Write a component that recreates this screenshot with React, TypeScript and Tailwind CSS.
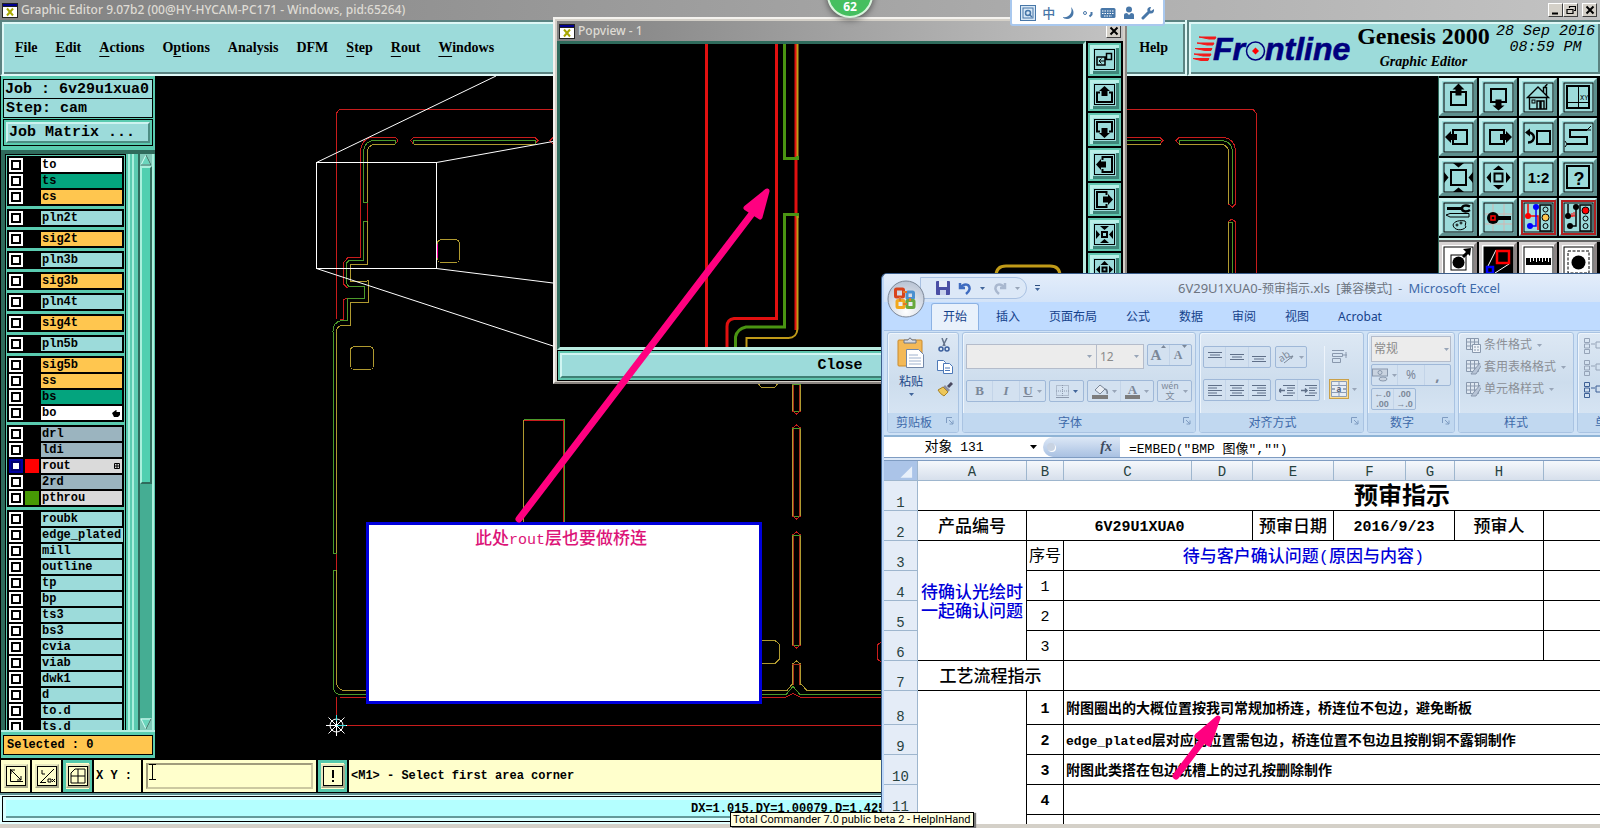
import type { ReactNode } from "react";
import { clsx } from "clsx";

const UI = "font-['Noto_Sans','Noto_Sans_CJK_SC',sans-serif]";
const MONO = "font-['Liberation_Mono','Noto_Sans_CJK_SC',monospace]";
const SERIF = "font-['Liberation_Serif',serif]";

/* ---------- data ---------- */

const MENUS: [string, string, string][] = [
  ["", "F", "ile"],
  ["", "E", "dit"],
  ["", "A", "ctions"],
  ["O", "p", "tions"],
  ["Analysis", "", ""],
  ["DFM", "", ""],
  ["", "S", "tep"],
  ["", "R", "out"],
  ["", "W", "indows"],
];

type Layer = { name: string; tone: string; swatch?: string; active?: boolean; mark?: string };

const WHITE = "bg-white";
const GREEN = "bg-[#04a47e]";
const ORANGE = "bg-[#ffc64f]";
const AQUA = "bg-[#9cdbda]";
const STEEL = "bg-[#9bb4bf]";
const SILVER = "bg-[#dadada]";

const LAYER_GROUPS: Layer[][] = [
  [{ name: "to", tone: WHITE }, { name: "ts", tone: GREEN }, { name: "cs", tone: ORANGE }],
  [{ name: "pln2t", tone: AQUA }],
  [{ name: "sig2t", tone: ORANGE }],
  [{ name: "pln3b", tone: AQUA }],
  [{ name: "sig3b", tone: ORANGE }],
  [{ name: "pln4t", tone: AQUA }],
  [{ name: "sig4t", tone: ORANGE }],
  [{ name: "pln5b", tone: AQUA }],
  [
    { name: "sig5b", tone: ORANGE },
    { name: "ss", tone: ORANGE },
    { name: "bs", tone: GREEN },
    { name: "bo", tone: WHITE, mark: "hand" },
  ],
  [
    { name: "drl", tone: STEEL },
    { name: "ldi", tone: STEEL },
    { name: "rout", tone: SILVER, swatch: "bg-[#ff0000]", active: true, mark: "grid" },
    { name: "2rd", tone: STEEL },
    { name: "pthrou", tone: SILVER, swatch: "bg-[#479a05]" },
  ],
  ["roubk", "edge_plated", "mill", "outline", "tp", "bp", "ts3", "bs3", "cvia", "viab", "dwk1", "d", "to.d", "ts.d"].map(
    (name) => ({ name, tone: AQUA })
  ),
];

/* ---------- tool icons, all on a 38 unit grid ---------- */

const line = { fill: "none", stroke: "#000", strokeWidth: 2 };

const ICONS: Record<string, ReactNode> = {
  up: (
    <>
      <rect x="12" y="14" width="15" height="13" {...line} />
      <path d="M19.500 5.500l6 6h-3v6h-6v-6h-3z" />
    </>
  ),
  down: (
    <>
      <rect x="12" y="11" width="15" height="13" {...line} />
      <path d="M19.500 32.500l6-5h-3v-6h-6v6h-3z" />
    </>
  ),
  left: (
    <>
      <rect x="14" y="12" width="14" height="14" {...line} />
      <path d="M6 19l6-6v3h6v6h-6v3z" />
    </>
  ),
  right: (
    <>
      <rect x="11" y="12" width="14" height="14" {...line} />
      <path d="M33 19l-6-6v3h-6v6h6v3z" />
    </>
  ),
  home: (
    <>
      <path d="M8.500 19.500L19 9l10.500 10.500zM10.500 19.500V31h17V19.500M24.500 14V9.500h3V17M26 9c0-2 2-1 2-3M18 31v-8h3v8m1 0v-8h3v8" fill="none" stroke="#000" strokeWidth="1.400" />
      <rect x="13" y="22" width="3" height="3" fill="none" stroke="#000" />
    </>
  ),
  origin: (
    <>
      <rect x="8" y="8" width="22" height="22" {...line} />
      <path d="M19.500 8v22M8 24.500h22" stroke="#000" />
      <text x="21" y="22" fontSize="7" fontFamily="Liberation Mono">XY</text>
    </>
  ),
  back: (
    <>
      <rect x="18" y="13" width="13" height="13" {...line} />
      <path d="M8 14.500c9-1 9 10 1 10" fill="none" stroke="#000" strokeWidth="2.500" />
      <path d="M6 14.500l5-4v8z" />
    </>
  ),
  serp: (
    <>
      <path d="M28 12H11v7h17v7H8" {...line} />
      <path d="M28 12l4-4M28 12h4M8 26l-2-3M8 26l-2 3" stroke="#000" />
    </>
  ),
  zoomIn: (
    <>
      <rect x="12" y="12" width="15" height="15" {...line} />
      <path d="M14 5h11l-5.500 4.500zM14 34h11l-5.500-4.500zM5 14v11l4.500-5.500zM34 14v11l-4.500-5.500z" />
    </>
  ),
  zoomOut: (
    <>
      <rect x="15.500" y="15.500" width="8" height="8" {...line} />
      <path d="M14 12h11l-5.500-4.500zM14 27h11l-5.500 4.500zM12 14v11l-4.500-5.500zM27 14v11l4.500-5.500z" />
    </>
  ),
  scale: (
    <text x="19.500" y="25" fontSize="15" fontWeight="700" textAnchor="middle" fontFamily="Liberation Sans">
      1:2
    </text>
  ),
  help: (
    <>
      <rect x="8" y="8" width="22" height="22" {...line} />
      <text x="20" y="27" fontSize="18" textAnchor="middle" fontFamily="Liberation Sans" fontWeight="700">?</text>
    </>
  ),
  tools: (
    <>
      <path d="M8 10.500h14" stroke="#000" strokeWidth="3" />
      <path d="M31 8.500c-4-2-8-1-8 2s4 4 8 1.500" fill="none" stroke="#000" strokeWidth="2.500" />
      <path d="M7 17l4-1.500h19v3.500H11z" fill="none" stroke="#000" />
      <path d="M14 27c1-4 7-5 12-4 2 2-1 4 1 6-3 4-12 4-13-2z" fill="none" stroke="#000" />
      <circle cx="18" cy="27" r="1" fill="none" stroke="#000" />
      <circle cx="22" cy="25" r="1" fill="none" stroke="#000" />
    </>
  ),
  snap: (
    <>
      <path d="M14 6v27M25 6v27M6 16h27M6 26h27" stroke="#d3b5b0" />
      <circle cx="14" cy="20" r="6" />
      <path d="M14 20h18" stroke="#000" strokeWidth="4" />
      <rect x="12" y="18" width="4" height="4" fill="none" stroke="#f00" strokeWidth="1.500" />
    </>
  ),
  netA: (
    <>
      <path d="M9 6v12h10v14" fill="none" stroke="#f00" strokeWidth="1.500" />
      <path d="M17 9v19h-6" fill="none" stroke="#00f" strokeWidth="1.500" />
      <circle cx="9" cy="18" r="3" fill="#f00" />
      <circle cx="17" cy="9" r="3" fill="#00f" />
      <circle cx="11" cy="28" r="3" fill="#00f" />
      <rect x="21" y="7" width="11" height="26" fill="none" stroke="#000" strokeWidth="1.500" />
      <circle cx="26.500" cy="11.500" r="2.500" fill="none" stroke="#000" />
      <circle cx="26.500" cy="19.500" r="3.500" fill="#ffc64f" stroke="#000" />
      <circle cx="26.500" cy="28" r="2.500" fill="none" stroke="#000" />
    </>
  ),
  netB: (
    <>
      <path d="M9 6v12M17 9v19h-6" fill="none" stroke="#000" strokeWidth="1.500" />
      <path d="M11 18h5M13 15v4M15 14v4" stroke="#f00" />
      <circle cx="9" cy="18" r="3" />
      <circle cx="17" cy="9" r="3" />
      <circle cx="11" cy="28" r="3" />
      <rect x="21" y="7" width="11" height="26" fill="none" stroke="#000" strokeWidth="1.500" />
      <circle cx="26.500" cy="12.500" r="3.500" fill="#f00" stroke="#000" />
      <circle cx="26.500" cy="20.500" r="2.500" fill="none" stroke="#000" />
      <circle cx="26.500" cy="28" r="2.500" fill="none" stroke="#000" />
    </>
  ),
  select: (
    <>
      <rect x="12" y="13" width="15" height="15" fill="none" stroke="#000" />
      <circle cx="19.500" cy="20.500" r="6" />
      <path d="M24 15l5-5" stroke="#000" strokeWidth="3" />
      <path d="M32 6l-1 8-7-7z" />
    </>
  ),
  area: (
    <>
      <rect x="5" y="5" width="29" height="29" />
      <path d="M8 26l9-18M16 31l14-9" stroke="#fff" />
      <rect x="18" y="9" width="12" height="12" fill="none" stroke="#f00" strokeWidth="2.500" />
      <rect x="8" y="25" width="6" height="6" fill="none" stroke="#00f" strokeWidth="2.500" />
    </>
  ),
  ruler: <path d="M7 16v7h25v-7h-2v4h-1v-4h-2v3h-1v-3h-2v4h-1v-4h-2v3h-1v-3h-2v4h-1v-4h-2v3h-1v-3h-2v4h-1v-4z" />,
  pad: (
    <>
      <rect x="9" y="9" width="21" height="22" fill="none" stroke="#000" strokeDasharray="3 1.500" />
      <circle cx="19.500" cy="20.500" r="7" />
    </>
  ),
};

/* the popup's own smaller tiles, on a 21 unit grid */
const POP_ICONS: Record<string, ReactNode> = {
  detach: (
    <>
      <path d="M3 8h8v8H3zM12.500 4.500h5v6h-5z" fill="none" stroke="#000" strokeWidth="1.500" />
      <path d="M5 12h6M7.500 9.500L5 12l2.500 2.500" fill="none" stroke="#000" />
    </>
  ),
  up: (
    <>
      <path d="M6 8.500H3V18h15V8.500h-3" {...line} />
      <path d="M10.500 2l5.500 5h-2.500v5h-6V7H5z" />
    </>
  ),
  down: (
    <>
      <path d="M6 12.500H3V3h15v9.500h-3" {...line} />
      <path d="M10.500 19l5.500-5h-2.500V9h-6v5H5z" />
    </>
  ),
  left: (
    <>
      <path d="M8.500 6V3H18v15H8.500v-3" {...line} />
      <path d="M2 10.500L7 5v2.500h5v6H7V16z" />
    </>
  ),
  right: (
    <>
      <path d="M12.500 6V3H3v15h9.500v-3" {...line} />
      <path d="M19 10.500L14 5v2.500H9v6h5V16z" />
    </>
  ),
  zoomIn: (
    <>
      <rect x="8" y="8" width="5" height="5" {...line} />
      <path d="M6 2h9l-4.500 4zM6 19h9l-4.500-4zM2 6v9l4-4.500zM19 6v9l-4-4.500z" />
    </>
  ),
  zoomOut: (
    <>
      <rect x="8.500" y="8.500" width="4" height="4" {...line} />
      <path d="M6.500 6h8l-4-4zM6.500 15h8l-4 4zM6 6.500v8l-4-4zM15 6.500v8l4-4z" />
    </>
  ),
};

const TOOLS = ["up", "down", "home", "origin", "left", "right", "back", "serp", "zoomIn", "zoomOut", "scale", "help", "tools", "snap", "netA", "netB"];
const EDIT_TOOLS = ["select", "area", "ruler", "pad"];
const POP_TOOLS = ["detach", "up", "down", "left", "right", "zoomIn", "zoomOut"];

function Tile({ icon, white }: { icon: string; white?: boolean }) {
  const red = icon.startsWith("net");
  return (
    <button
      type="button"
      aria-label={icon}
      className={clsx(
        "flex size-[38px] items-center justify-center border-3",
        white
          ? "border-t-[#d8d4d4] border-r-[#8c8585] border-b-[#8c8585] border-l-[#d8d4d4] bg-white"
          : "border-t-[#c9f3f1] border-r-[#5d8f8d] border-b-[#5d8f8d] border-l-[#c0eeec] bg-[#9cdbda]"
      )}
    >
      <svg viewBox="4 4 31 31" className={clsx("size-[31px] shrink-0", red && "outline-2 outline-[#b02020]")}>
        <rect x="5" y="5" width="29" height="29" fill="none" stroke="#000" />
        {ICONS[icon]}
      </svg>
    </button>
  );
}

function PopTile({ icon }: { icon: string }) {
  return (
    <button type="button" aria-label={icon} className="flex size-[33px] shrink-0 items-center justify-center border-2 border-[#5fc5ae] bg-[#9cdbda] shadow-[inset_3px_3px_0_#b9f0e8,inset_-3px_-3px_0_#3f8579]">
      <svg viewBox="0 0 21 21" className="size-[21px] shrink-0">
        <rect x="0.500" y="0.500" width="20" height="20" fill="none" stroke="#000" />
        {POP_ICONS[icon]}
      </svg>
    </button>
  );
}

/* ---------- editor chrome ---------- */

function WinButton({ label, children }: { label: string; children: ReactNode }) {
  return (
    <button type="button" aria-label={label} className="flex h-[14px] w-[15px] items-center justify-center border border-t-white border-r-[#404040] border-b-[#404040] border-l-white bg-[#d4d0c8]">
      <svg viewBox="0 0 10 10" className="size-[10px]" fill="none" stroke="#000" strokeWidth="2">{children}</svg>
    </button>
  );
}

const CROSS = <path d="M1.500 1.500l7 7M8.500 1.500l-7 7" />;

function XIcon() {
  return (
    <svg viewBox="0 0 16 15" className="h-[15px] w-4 shrink-0">
      <rect width="16" height="15" fill="#222" />
      <rect x="1" y="4" width="14" height="10" fill="#fff" />
      <rect x="1" y="1" width="14" height="2" fill="#000090" />
      <path d="M5 5.500l6 7M11 5.500l-6 7" stroke="#a8a800" strokeWidth="2" />
    </svg>
  );
}

function TitleBar() {
  return (
    <header className="flex h-5 shrink-0 items-center gap-[3px] bg-linear-to-r from-[#828282] to-[#c3c3c3] pr-[3px] pl-[2px]">
      <XIcon />
      <h1 className={clsx(UI, "text-[12px] leading-5 font-medium whitespace-nowrap text-[#dedbd4]")}>
        Graphic Editor 9.07b2 (00@HY-HYCAM-PC171 - Windows, pid:65264)
      </h1>
      <div className="ml-auto flex">
        <WinButton label="Minimize"><path d="M1 8.500h6" /></WinButton>
        <WinButton label="Restore"><path d="M3.500 3V1.500h6v4H8M1 4.500h6v4H1z" strokeWidth="1.200" /></WinButton>
        <span className="w-1" />
        <WinButton label="Close">{CROSS}</WinButton>
      </div>
    </header>
  );
}

function FrontlineLogo() {
  return (
    <svg viewBox="0 0 160 30" className="h-[30px] w-40 shrink-0 overflow-visible" role="img" aria-label="Frontline">
      <path d="M6 3h17l-1 2H16zM4 9h17l-1 2H14zM2 14.500h17l-1 2H12zM1 20h17l-1 2H10zM0 24.500h16l-1 2H8z" fill="#f21b1b" stroke="#f21b1b" />
      <g fill="#00007e" stroke="#00007e" strokeWidth="0.600" fontFamily="Liberation Sans" fontWeight="700" fontStyle="italic" fontSize="32">
        <text x="20" y="25.500">Fr</text>
        <text x="72" y="25.500">ntline</text>
      </g>
      <circle cx="62.500" cy="17" r="9" fill="none" stroke="#00007e" strokeWidth="1.500" />
      <path d="M62.500 13.500l3.500 3.500-3.500 3.500L59 17z" fill="#f00" />
    </svg>
  );
}

const BEVEL = "border-t-2 border-l-2 border-b-2 border-t-[#5a8381] border-l-[#5a8381] border-b-[#def8f6] bg-[#9cdbda] shadow-[inset_2px_2px_0_#def8f6,inset_-2px_-2px_0_#5a8381]";

function MenuBar() {
  return (
    <div className={clsx(SERIF, "flex h-14 shrink-0 bg-[#def8f6]")}>
      <nav className={clsx(BEVEL, "flex flex-1 items-center gap-[18px] pr-[17px] pl-[13px] text-[14px] leading-5 font-bold")}>
        {MENUS.map(([a, key, b]) => (
          <button key={a + key + b} type="button">
            {a}
            <span className="underline decoration-1 underline-offset-4">{key}</span>
            {b}
          </button>
        ))}
        <button type="button" className="ml-auto">Help</button>
      </nav>
      <div className={clsx(BEVEL, "ml-[2px] flex w-[413px] gap-[3px] pl-1")}>
        <div className="pt-3">
          <FrontlineLogo />
        </div>
        <div className="w-[135px] shrink-0 text-center font-bold whitespace-nowrap">
          <p className="text-[24px] leading-7">Genesis 2000</p>
          <p className="text-[14px] leading-6 italic">Graphic Editor</p>
        </div>
        <p className={clsx(MONO, "pt-[2px] pl-[2px] text-center text-[15px] leading-4 whitespace-nowrap italic")}>
          28 Sep 2016
          <br />
          08:59 PM
        </p>
      </div>
    </div>
  );
}

function LayerRow({ layer }: { layer: Layer }) {
  return (
    <label className="flex h-4 items-center gap-[2px]">
      <input
        type="checkbox"
        className={clsx(
          "size-[14px] shrink-0 appearance-none border-2 bg-white",
          layer.active ? "border-[#0000a0] shadow-[inset_0_0_0_2px_#000070]" : "border-white shadow-[inset_0_0_0_2px_#000]"
        )}
      />
      <span className={clsx("size-[14px] shrink-0", layer.swatch ?? "bg-black")} />
      <span className={clsx("flex h-[14px] flex-1 items-center justify-between pr-[2px] pl-px leading-[14px]", layer.tone)}>
        {layer.name}
        {layer.mark === "hand" && (
          <svg viewBox="0 0 8 8" className="size-2"><path d="M0 4l4-3 1 1-1 1h4v3L6 8H2z" /></svg>
        )}
        {layer.mark === "grid" && (
          <svg viewBox="0 0 6 6" className="size-[6px]"><path d="M.5.5h5v5h-5zM3 0v6M0 3h6" fill="none" stroke="#000" /></svg>
        )}
      </span>
    </label>
  );
}

function LeftPanel() {
  return (
    <aside className={clsx(MONO, "ml-px flex w-[154px] shrink-0 flex-col overflow-hidden bg-[#5acbb0] pt-[3px]")}>
      <p className="mx-[2px] h-[19px] border border-b-0 border-black bg-[#9cdbda] pl-px text-[15px] leading-[19px] font-bold whitespace-nowrap">Job : 6v29u1xua0</p>
      <p className="mx-[2px] h-[20px] border border-black bg-[#9cdbda] pl-[2px] text-[15px] leading-[19px] font-bold">Step: cam</p>
      <div className="mx-[2px] mt-px border border-black p-[2px]">
        <button type="button" className="block h-[21px] w-full border-2 border-t-[#cdf3f0] border-r-[#4c8d84] border-b-[#4c8d84] border-l-[#cdf3f0] bg-[#9cdbda] pl-px text-left text-[15px] leading-[17px] font-bold">
          Job Matrix ...
        </button>
      </div>
      <div className="mt-1 flex min-h-0 flex-1 border-t-4 border-l-4 border-[#2f6b5c]">
        <div className="flex w-[121px] shrink-0 flex-col gap-[3px] overflow-hidden border border-b-0 border-black px-px pt-px text-[12px] font-bold">
          {LAYER_GROUPS.map((group) => (
            <div key={group[0].name} className="shrink-0 bg-black px-[2px] py-px">
              {group.map((layer) => (
                <LayerRow key={layer.name} layer={layer} />
              ))}
            </div>
          ))}
        </div>
        <div className="ml-[2px] w-[6px] border-r-2 border-l-2 border-[#a9f0dd] bg-[#5acbb0]" />
        <div className="ml-1 flex w-4 flex-col border-r-2 border-l-2 border-r-[#a9f0dd] border-l-[#2f6b5c] bg-[#45ad93]">
          <svg viewBox="0 0 12 12" className="size-3 bg-[#7fc9b8]"><path d="M6 1L1 11h10z" fill="#6ad6bd" stroke="#d5fff5" /><path d="M6 1l5 10H1" fill="none" stroke="#2f6b5c" /></svg>
          <div className="h-[318px] border-2 border-t-[#a9f0dd] border-r-[#2f6b5c] border-b-[#2f6b5c] border-l-[#a9f0dd] bg-[#50cfb0]" />
          <svg viewBox="0 0 12 12" className="mt-auto size-3 bg-[#7fc9b8]"><path d="M1 1h10L6 11z" fill="#6ad6bd" stroke="#d5fff5" /><path d="M11 1L6 11" stroke="#2f6b5c" /></svg>
        </div>
      </div>
      <div className="h-[2px] shrink-0 bg-[#b5efe3]" />
      <p className="mx-[2px] mt-[3px] mb-[3px] h-5 shrink-0 border border-black bg-[#ffc64f] pl-[3px] text-[12px] leading-[18px] font-bold">Selected : 0</p>
    </aside>
  );
}

/* board outline, drawn in window coordinates */
function Board() {
  const red = "#c81c1c";
  const green = "#4c9a2a";
  const gold = "#b09a30";
  const strips = [[384, 411], [428, 516], [535, 645]];
  return (
    <svg viewBox="155 76 1283 683" className="absolute top-0 left-0 h-[683px] w-[1283px]" fill="none" shapeRendering="crispEdges">
      <g stroke={red}>
        <path d="M336.500 319V113l3-3.500H1253l3.500 4V400M336.500 697v28.500H1000" />
        <path d="M395 144l2-2v-3l-2-2H371q-9 3-10.500 13V257.500H348l-4.500 5V284l4 4M340 319h3V300l4-2" />
        <path d="M413.500 137.500l-3 3 3 3.500M413.500 137.500H535l3 3-3 3.500M560 137.500h-7l-3 3 3 3.500" />
        <path d="M1100 137.500h60l3 3-3 3.500M1179 144l-3-3.500 3-3H1224q11 2 11.500 13V204l-3 3-4-3M1228 222l4-3 3.500 3V300" />
        <path d="M367.500 202v19M336.500 553v17M340 697.500H785l8-4 8 4H1000" />
        <path d="M563.500 421V540M524 420.500h40" />
      </g>
      <g stroke={green}>
        <path d="M395 144v-3.500H373q-8 1-9.500 10V202h4M367.500 221.500h-4V260.500H349l-3 3V283l3 3.500h15v12H347V320.500h-6q-8 2-8 11V553.500h3.500M336.500 570.500h-3.500V687q1 6 6 7.500H786l7-8 7 8H1000" />
        <path d="M413.500 144v-3.500H535v3.500M1100 140.500h61M1179 144v-3.500H1222q10 1 10.500 11V204M1228 222.500h4.500V300" />
        <path d="M523.500 419.500H564.500V540" />
      </g>
      <g stroke={gold}>
        <path d="M395 144.500H374q-6 1-6.500 7V202M367.500 221V264.500H350.500V281.500H366l2.500-1V302.500H350.500V325.500H341q-4 1-4.500 6V553M336.500 570V684q2 6 7 6.500H787l5-6M801 684l6 6.500H1000" />
        <path d="M413.500 144.500H535M1100 144.500h61M1179 144.500H1222q6 1 6.500 7V204M1228.500 222V300M523.500 420V540" />
        <rect x="437.500" y="239.500" width="22" height="23" rx="4" />
        <rect x="350.500" y="346.500" width="23" height="23" rx="4" />
        <path d="M758.500 384l3 3.500h13l3-3.500M762 640.500h13l4.500 4V659l-4.500 4.500H762" />
        <path d="M882 641l-4.500 4V659l4.500 4" stroke={red} />
      </g>
      {strips.map(([a, b]) => (
        <g key={a}>
          <path d={`M792.500 ${a}V${b}M800.500 ${a}V${b}`} stroke={gold} />
          <path d={`M793.500 ${a}V${b}M799.500 ${a}V${b}`} stroke="#a8301a" />
          <path d={`M792 ${a}.500h9M792 ${b}.500h9`} stroke={green} />
          <path d={`M792.500 ${a}l4-3 4 3M792.500 ${b}l4 3 4-3`} stroke={red} />
        </g>
      ))}
      <path d="M792.500 685V664l4-3 4 3v21" stroke={gold} />
      <path d="M793.500 685V665M799.500 665v20M792 664.500h9" stroke="#a8301a" />
      <path d="M437 244v14" stroke="#ff00a0" strokeWidth="2" />
      <g stroke="#fff" shapeRendering="auto">
        <rect x="316.500" y="162.500" width="120" height="106" />
        <path d="M316.500 162.500L496 76M436.500 162.500L553 141.500M436.500 268.500L553 283M316.500 268.500L553 346" />
        <circle cx="336.500" cy="725.500" r="6.500" />
        <path d="M326 725.500h21M336.500 715v21M328.500 717.500l16 16M344.500 717.500l-16 16" />
      </g>
      <path d="M337 725.500h9M336.500 715v6" stroke="#40e0e0" />
    </svg>
  );
}

function ToolGrid() {
  return (
    <aside className="w-[162px] shrink-0 border-l border-[#2f6b5c]">
      <div className="grid grid-cols-[38px_38px_38px_38px] gap-[2px] border-b-2 border-[#c9f2ea] pt-[2px] pb-[2px]">
        {TOOLS.map((t) => (
          <Tile key={t} icon={t} />
        ))}
      </div>
      <div className="grid grid-cols-[38px_38px_38px_38px] gap-[2px] border-t-2 border-[#666]">
        {EDIT_TOOLS.map((t) => (
          <Tile key={t} icon={t} white />
        ))}
      </div>
    </aside>
  );
}

function CmdButton({ label, on, children }: { label: string; on?: boolean; children: ReactNode }) {
  return (
    <button
      type="button"
      aria-label={label}
      className={clsx("flex h-8 w-[29px] shrink-0 items-center justify-center", on ? "border-3 border-[#55c8ac] bg-[#ffffcc]" : "bg-[#ffffcc]")}
    >
      <span className="flex size-6 shrink-0 items-center justify-center border-2 border-t-[#e8e8c0] border-r-[#a8a88a] border-b-[#a8a88a] border-l-[#e8e8c0]">
        <svg viewBox="0 0 20 20" className="size-5 shrink-0" fill="none" stroke="#000">
          <rect x="0.500" y="0.500" width="19" height="19" />
          {children}
        </svg>
      </span>
    </button>
  );
}

function CommandBar() {
  return (
    <div className={clsx(MONO, "flex h-[33px] shrink-0 gap-[2px] border-b border-black bg-black pl-px")}>
      <CmdButton label="Line"><path d="M4.500 3v12.500H17M5 4l10 10M5 8V4h4M15 10v4h-4" /></CmdButton>
      <CmdButton label="Angle">
        <path d="M3 17L17 3M3 16.500h6M5 4v4h3" />
        <path d="M11 13h3v3h-3zM15 13l3 3M18 13l-3 3" />
      </CmdButton>
      <CmdButton label="Grid" on><path d="M3 7l4-4h10v14H3zM10 3v14M3 10h14" /></CmdButton>
      <label htmlFor="xy" className="w-[47px] bg-[#ffffcc] pl-[2px] text-[12px] leading-8 font-bold whitespace-nowrap">X Y :</label>
      <div className="bg-[#ffffcc] p-[3px]">
        <input id="xy" defaultValue="" className="block h-[26px] w-[167px] border-2 border-t-[#a09c7c] border-r-[#ccc9a0] border-b-[#ccc9a0] border-l-[#a09c7c] bg-[#ffffcc] outline-none" />
      </div>
      <CmdButton label="Alert" on><path d="M10 4v8M10 14v2" strokeWidth="2" /></CmdButton>
      <p className="flex-1 bg-[#ffffcc] pl-[2px] text-[12px] leading-8 font-bold">&lt;M1&gt; - Select first area corner</p>
    </div>
  );
}

function StatusBar() {
  return (
    <footer className={clsx(MONO, "h-[35px] shrink-0 border-t-2 border-b-4 border-t-[#5f9090] border-b-[#d4d0c8] bg-[#e4ffff] pt-px pb-[2px] pl-[2px]")}>
      <p className="h-[26px] border border-r-0 border-black bg-[#b4ffff] pl-[688px] text-[12px] leading-6 font-bold shadow-[inset_3px_3px_0_#d8ffff,inset_0_-3px_0_#d8ffff,inset_0_-5px_0_#639a9a]">
        DX=1.015,DY=1.00079,D=1.425
      </p>
    </footer>
  );
}

/* ---------- floating windows ---------- */

function PopView() {
  return (
    <section className="absolute top-[17px] left-[553px] flex w-[574px] flex-col border-2 border-t-[#f4f2ee] border-r-[#8a8580] border-b-[#8a8580] border-l-[#f4f2ee] bg-[#d4d0c8] p-[2px] pb-px">
      <div className="flex h-5 items-center gap-[3px] bg-linear-to-r from-[#828282] to-[#c3c3c3] pr-[2px] pl-[2px]">
        <XIcon />
        <h2 className={clsx(UI, "text-[12px] leading-5 font-medium text-[#dedbd4]")}>Popview - 1</h2>
        <span className="ml-auto" />
        <WinButton label="Close">{CROSS}</WinButton>
      </div>
      <div className="flex h-[309px] bg-black">
        <div className="flex-1 border-t-3 border-r-3 border-b-3 border-l-3 border-t-[#2f6b5c] border-r-[#b9ebe0] border-b-[#b9ebe0] border-l-[#2f6b5c]">
          <svg viewBox="560 44 523 303" className="h-[303px] w-full" preserveAspectRatio="xMinYMin slice" fill="none">
            <g stroke="#e01010" strokeWidth="3">
              <path d="M706.500 44V348M776.500 44V318.500H734q-7 1-7 8V348" />
              <path d="M796 44V330" />
            </g>
            <g stroke="#4a9412" strokeWidth="3">
              <path d="M784.500 44V158.500H797.500V156M797.500 218V214.500H784.500V327H746q-9 2-10.500 10V348" />
            </g>
            <g stroke="#c09a18" strokeWidth="2">
              <path d="M797.500 44V156M797.500 216V329q-1 9-9 9H746.500V348" />
              <path d="M996 276q0-10 10-10h44q10 0 10 10" strokeWidth="3" />
            </g>
          </svg>
        </div>
        <div className="ml-px flex w-9 flex-col gap-[2px] overflow-hidden pt-[2px] pl-px">
          {POP_TOOLS.map((t) => (
            <PopTile key={t} icon={t} />
          ))}
        </div>
      </div>
      <div className="border border-black bg-[#5fc5ae] p-[2px]">
        <button type="button" className={clsx(MONO, "block h-[25px] w-full border-2 border-t-[#d0f5f2] border-r-[#3f7f74] border-b-[#3f7f74] border-l-[#d0f5f2] bg-[#9cdbda] text-[15px] leading-5 font-bold")}>
          Close
        </button>
      </div>
    </section>
  );
}

function ImeBar() {
  return (
    <div className="absolute -top-1 left-[1010px] flex h-[30px] w-[155px] items-center justify-between rounded-b-[3px] border-2 border-[#a9c8ee] bg-white px-2 pt-1 text-[#4877a8]">
      <svg viewBox="0 0 16 16" className="size-4" fill="none" stroke="currentColor">
        <rect x="0.500" y="0.500" width="15" height="15" fill="#d8e8f6" />
        <rect x="3" y="3" width="10" height="10" />
        <circle cx="8" cy="8" r="2.500" strokeWidth="1.500" />
        <path d="M9 9l3 3" strokeWidth="1.500" />
      </svg>
      <span className={clsx(UI, "text-[13px] leading-4 font-medium")}>中</span>
      <svg viewBox="0 0 14 14" className="size-[14px]" fill="currentColor"><path d="M9 1c5 5 2 12-4 12-2 0-4-1-4-2 6 1 10-4 8-10z" /></svg>
      <svg viewBox="0 0 12 12" className="size-3" fill="none" stroke="currentColor"><circle cx="3" cy="6" r="1.500" /><path d="M9.500 5v2.500l-2 2" strokeWidth="2" /></svg>
      <svg viewBox="0 0 16 12" className="h-3 w-4">
        <rect x="0.500" y="1" width="15" height="10" rx="1.500" fill="currentColor" />
        <path d="M2 4h12M2 6.500h12M4 9h8" stroke="#fff" strokeDasharray="1.500 1" />
      </svg>
      <svg viewBox="0 0 12 14" className="h-[14px] w-3" fill="currentColor"><circle cx="6" cy="3.500" r="3" /><path d="M1 13V9q0-2 3-2l2 2 2-2q3 0 3 2v4z" /></svg>
      <svg viewBox="0 0 14 14" className="size-[14px]"><path d="M2 12l6-6" stroke="currentColor" strokeWidth="3" strokeLinecap="round" /><path d="M13 3l-3 2-1-1 1-3c-3 0-4 2-3.500 4L9 7.500C12 8 13.500 6 13 3z" fill="currentColor" /></svg>
    </div>
  );
}

/* ---------- spreadsheet window ---------- */

function Caret({ dark }: { dark?: boolean }) {
  return (
    <svg viewBox="0 0 5 3" className={clsx("h-[3px] w-[5px] shrink-0", dark ? "fill-[#41659a]" : "fill-[#98a5b8]")}>
      <path d="M0 0h5L2.500 3z" />
    </svg>
  );
}

function Group({ title, className, corner, children }: { title: string; className: string; corner?: boolean; children: ReactNode }) {
  return (
    <div className={clsx("flex h-[101px] shrink-0 flex-col overflow-hidden rounded-[3px] border border-[#a9c3e2] bg-linear-to-b from-[#dde8f4] via-[#cddded] to-[#dbe8f6] shadow-[inset_1px_1px_0_#eef5fc]", className)}>
      <div className="flex-1">{children}</div>
      <div className={clsx("relative h-[19px] shrink-0 bg-[#c1d8f0] text-center text-[12px] leading-[19px] whitespace-nowrap text-[#3e6aaa]", corner && "pr-[18px]")}>
        {title}
        {corner && (
          <svg viewBox="0 0 8 8" className="absolute top-1 right-1 size-2" fill="none" stroke="#7f9cc2"><path d="M.5 6V.5H6M3 3l4 4M7 3.500V7H3.500" /></svg>
        )}
      </div>
    </div>
  );
}

function Cluster({ className, children }: { className?: string; children: ReactNode }) {
  return (
    <div className={clsx("flex h-[22px] items-stretch divide-x divide-[#c3d4e8] rounded-[2px] border border-[#9fb8d8] bg-[#d3e1f0] text-[#7b8798]", className)}>
      {children}
    </div>
  );
}

function Btn({ label, children }: { label: string; children: ReactNode }) {
  return (
    <button type="button" aria-label={label} className="flex flex-1 items-center justify-center gap-1">
      {children}
    </button>
  );
}

function Lines({ rows }: { rows: [number, number][] }) {
  return (
    <svg viewBox="0 0 14 13" className="h-[13px] w-[14px]" stroke="#5f6f88">
      {rows.map(([x, w], i) => (
        <path key={i} d={`M${x} ${1.5 + i * 2.5}h${w}`} />
      ))}
    </svg>
  );
}

function Indent({ flip }: { flip?: boolean }) {
  return (
    <svg viewBox="0 0 16 13" className="h-[13px] w-4" fill="none" stroke="#5f6f88">
      <path d="M4 1.500h12M8 4h8M8 6.500h6M8 9h8M4 11.500h10" />
      <path d={flip ? "M0 6.500h6M4 4.500l2 2-2 2" : "M6 6.500H0M2 4.500l-2 2 2 2"} strokeWidth="1.500" />
    </svg>
  );
}

function StyleIcon({ kind }: { kind: number }) {
  return (
    <svg viewBox="0 0 16 16" className="size-4 shrink-0" fill="none" stroke="#8998ad">
      <path d="M1.500 1.500h12v11h-12zM1.500 5h12M1.500 9h12M5.500 1.500v11M9.500 1.500v11" fill="#dfe8f2" />
      {kind === 0 ? <path d="M7.500 7.500h8v8h-8zM9 10h2M12 10h2M9 13h2M12 13h2" fill="#eef3f9" /> : <path d="M15 4l-6 7-3 4h5l5-8" fill="#b7c4d6" />}
    </svg>
  );
}

const TABS = ["插入", "页面布局", "公式", "数据", "审阅", "视图", "Acrobat"];
const STYLES = ["条件格式", "套用表格格式", "单元格样式"];

function Ribbon() {
  return (
    <div className="flex h-[107px] shrink-0 gap-[3px] overflow-hidden border-t border-b-2 border-t-[#a3c0e6] border-b-[#8fb4d6] bg-[#cfe2f6] pt-px pl-[3px]">
      <Group title="剪贴板" corner className="w-[72px]">
        <div className="flex gap-3 pt-1 pl-[9px]">
          <button type="button" className="flex w-[28px] flex-col items-center text-[12px] leading-[22px] whitespace-nowrap text-[#1e4687]">
            <svg viewBox="0 0 28 32" className="h-8 w-7">
              <rect x="1" y="3" width="24" height="26" rx="1" fill="#f3b957" stroke="#c98a2c" />
              <path d="M7 6V3h4q2-4 4 0h4v3z" fill="#d7dbe2" stroke="#6c7686" />
              <path d="M9.500 12.500h12l5 5v13h-17z" fill="#fff" stroke="#7187a8" />
              <path d="M12 18h9M12 21h12M12 24h12M12 27h12" stroke="#9fb2ce" />
            </svg>
            <span className="pt-[2px]">粘贴</span>
            <Caret dark />
          </button>
          <div className="flex flex-col gap-2 pt-px">
            <svg viewBox="0 0 14 14" className="size-[14px]" fill="none" stroke="#3b5f9c" strokeWidth="1.500"><path d="M5 0l3 8M10 0L6 8" stroke="#66758c" /><circle cx="4" cy="11" r="2" /><circle cx="10" cy="11" r="2" /></svg>
            <svg viewBox="0 0 16 14" className="h-[14px] w-4" fill="#fff" stroke="#4d79b8"><path d="M.5.500h6l2 2v8h-8z" /><path d="M6.500 3.500h6l3 3v7h-9zM8 8h5M8 10.500h5" /></svg>
            <svg viewBox="0 0 16 15" className="h-[15px] w-4"><path d="M15 1l-4 4" stroke="#4a4a60" strokeWidth="3" /><path d="M8 3l5 5-2 2-5-5z" fill="#8d8fa0" /><path d="M6 5l5 5-4 4Q3 12 1 8z" fill="#edc75a" stroke="#a88325" /></svg>
          </div>
        </div>
      </Group>

      <Group title="字体" corner className="w-[234px]">
        <div className="flex flex-col gap-[11px] pt-[11px] pl-[3px]">
          <div className="flex">
            <div className="relative flex">
              <select aria-label="字体" className="h-[25px] w-[131px] appearance-none border border-[#b4bccb] bg-[#ececec]"><option></option></select>
              <span className="absolute top-[11px] right-[5px] flex"><Caret /></span>
            </div>
            <div className="relative flex">
              <select aria-label="字号" className="h-[25px] w-[47px] appearance-none border border-l-0 border-[#b4bccb] bg-[#ececec] pl-[3px] text-[12px] text-[#8b8b8b]"><option>12</option></select>
              <span className="absolute top-[11px] right-[5px] flex"><Caret /></span>
            </div>
            <Cluster className={clsx(SERIF, "ml-[3px] w-[45px] font-bold")}>
              <Btn label="增大字号">
                <span className="text-[15px] leading-4">A</span>
                <svg viewBox="0 0 5 3" className="-ml-1 h-[3px] w-[5px] self-start pt-0 fill-[#7b8798]"><path d="M0 3h5L2.500 0z" /></svg>
              </Btn>
              <Btn label="减小字号">
                <span className="text-[12px] leading-4">A</span>
                <svg viewBox="0 0 5 3" className="-ml-1 h-[3px] w-[5px] self-start fill-[#7b8798]"><path d="M0 0h5L2.500 3z" /></svg>
              </Btn>
            </Cluster>
          </div>
          <div className="flex gap-[3px]">
            <Cluster className={clsx(SERIF, "w-20 text-[13px]")}>
              <Btn label="加粗"><b>B</b></Btn>
              <Btn label="倾斜"><i className="font-bold">I</i></Btn>
              <Btn label="下划线"><u className="font-bold">U</u><Caret /></Btn>
            </Cluster>
            <Cluster className="w-[35px]">
              <Btn label="边框">
                <svg viewBox="0 0 13 13" className="size-[13px]" stroke="#8c99ad" fill="none"><path d="M.5.500h12v10H.5zM6.500 0v11M0 6h13" strokeDasharray="1 1" /><path d="M0 12.500h13" /></svg>
                <Caret dark />
              </Btn>
            </Cluster>
            <Cluster className="w-[67px]">
              <Btn label="填充颜色">
                <svg viewBox="0 0 16 15" className="h-[15px] w-4"><path d="M3 6l5-5 5 4-5 5z" fill="#e8edf4" stroke="#7b8798" /><path d="M13 5q3 1 2 5" stroke="#7b8798" fill="none" strokeWidth="1.500" /><rect y="11" width="16" height="4" fill="#7c7c7c" /></svg>
                <Caret />
              </Btn>
              <Btn label="字体颜色">
                <span className={clsx(SERIF, "h-[15px] border-b-4 border-[#7c7c7c] px-[3px] text-[13px] leading-3 font-bold")}>A</span>
                <Caret />
              </Btn>
            </Cluster>
            <Cluster className="w-[35px]">
              <Btn label="拼音">
                <span className="flex flex-col font-['Noto_Sans_CJK_SC',sans-serif] text-[9px] leading-[10px]"><span>wén</span><span>文</span></span>
                <Caret />
              </Btn>
            </Cluster>
          </div>
        </div>
      </Group>

      <Group title="对齐方式" corner className="w-[165px]">
        <div className="flex gap-1 pt-[13px] pl-[3px]">
          <div className="flex flex-col gap-[11px]">
            <div className="flex gap-1">
              <Cluster className="w-[68px]">
                <Btn label="顶端对齐"><Lines rows={[[0, 14], [2, 10], [0, 14]]} /></Btn>
                <Btn label="垂直居中"><span className="pt-1"><Lines rows={[[0, 14], [2, 10], [0, 14]]} /></span></Btn>
                <Btn label="底端对齐"><span className="pt-2"><Lines rows={[[0, 14], [2, 10], [0, 14]]} /></span></Btn>
              </Cluster>
              <Cluster className="w-8">
                <Btn label="方向">
                  <svg viewBox="0 0 16 14" className="h-[14px] w-4"><text x="0" y="10" fontSize="10" fill="#7b8798" transform="rotate(-35 5 8)">ab</text><path d="M5 13l9-7M14 6l-4 1M14 6l-2 3" stroke="#7b8798" fill="none" /></svg>
                  <Caret />
                </Btn>
              </Cluster>
            </div>
            <div className="flex gap-1">
              <Cluster className="w-[68px]">
                <Btn label="左对齐"><Lines rows={[[0, 14], [0, 9], [0, 14], [0, 9], [0, 14]]} /></Btn>
                <Btn label="居中"><Lines rows={[[0, 14], [2, 10], [0, 14], [2, 10], [0, 14]]} /></Btn>
                <Btn label="右对齐"><Lines rows={[[0, 14], [5, 9], [0, 14], [5, 9], [0, 14]]} /></Btn>
              </Cluster>
              <Cluster className="w-[45px]">
                <Btn label="减少缩进"><Indent /></Btn>
                <Btn label="增加缩进"><Indent flip /></Btn>
              </Cluster>
            </div>
          </div>
          <div className="h-[54px] border-l border-[#eef4fb]" />
          <div className="flex flex-col gap-[14px] pt-[3px]">
            <svg viewBox="0 0 16 16" className="ml-[3px] size-4" fill="none" stroke="#8998ad"><path d="M0 1.500h12M.5 4.500h10v3H.5zM.5 9.500h8v4h-8zM10 6h5M14 3v6" /></svg>
            <button type="button" className="flex items-center gap-[3px]" aria-label="合并后居中">
              <span className="flex size-5 items-center justify-center border border-[#c9a04a] bg-[#fbdc92]">
                <svg viewBox="0 0 16 16" className="size-4"><path d="M.5.500h15v15H.5zM.5 4.500h15M.5 11.500h15M8 0v4M8 12v4" fill="#e6edf6" stroke="#8d9db5" /><path d="M1 8h3M12 8h3" stroke="#55647d" /><text x="8" y="10.500" fontSize="8" fontWeight="700" textAnchor="middle" fill="#55647d">a</text></svg>
              </span>
              <Caret />
            </button>
          </div>
        </div>
      </Group>

      <Group title="数字" corner className="w-[88px]">
        <div className="flex flex-col gap-[2px] pt-[3px] pl-[3px]">
          <div className="relative flex">
            <select aria-label="数字格式" className="h-[26px] w-20 appearance-none border border-[#b4bccb] bg-[#ececec] pl-[2px] text-[12px] text-[#8b8b8b]"><option>常规</option></select>
            <span className="absolute top-3 right-[5px] flex"><Caret /></span>
          </div>
          <Cluster className="w-20">
            <Btn label="会计数字格式">
              <svg viewBox="0 0 16 14" className="h-[14px] w-4" fill="#c9d3e0" stroke="#8998ad"><rect x="0.500" y="1" width="15" height="7" /><circle cx="8" cy="4.500" r="2" /><ellipse cx="11" cy="11" rx="4" ry="2" /></svg>
              <Caret />
            </Btn>
            <Btn label="百分比"><span className="text-[12px] leading-4">%</span></Btn>
            <Btn label="千位分隔"><span className="text-[15px] leading-3 font-bold">,</span></Btn>
          </Cluster>
          <Cluster className="w-[45px] font-['Liberation_Sans',sans-serif] text-[9px] leading-[10px] font-bold">
            <Btn label="增加小数位数"><span>←.0<br />.00</span></Btn>
            <Btn label="减少小数位数"><span>.00<br />→.0</span></Btn>
          </Cluster>
        </div>
      </Group>

      <Group title="样式" className="w-[116px]">
        <div className="flex flex-col pt-px pl-[6px] text-[12px] text-[#8b8f96]">
          {STYLES.map((s, i) => (
            <button key={s} type="button" className="flex h-[22px] items-center gap-[3px] whitespace-nowrap">
              <StyleIcon kind={i} />
              {s}
              <span className="pl-[2px]"><Caret /></span>
            </button>
          ))}
        </div>
      </Group>

      <Group title="单元格" className="w-[72px]">
        <div className="flex flex-col gap-[6px] pt-[5px] pl-[6px]">
          {[0, 1, 2].map((i) => (
            <svg key={i} viewBox="0 0 18 16" className="h-4 w-[18px]" fill="none" stroke={i === 2 ? "#3c5f95" : "#95a3b7"}>
              <path d="M.5.500h5v4h-5zM.5 6h5v4h-5zM.5 11.500h5v4h-5zM7 6h4M12 4h6v6h-6z" />
            </svg>
          ))}
        </div>
      </Group>
    </div>
  );
}

const COLS = ["A", "B", "C", "D", "E", "F", "G", "H", ""];

function RowHead({ n }: { n: number }) {
  return (
    <th className="border-r border-b border-[#9eb6ce] bg-[#e4ecf7] p-0 align-bottom text-[14px] leading-[14px] font-normal text-[#27413e]">{n}</th>
  );
}

const CELL = "border-r border-b border-black p-0 pt-1";

function Sheet() {
  return (
    <div className="min-h-0 flex-1 overflow-hidden bg-white">
      <table className={clsx(MONO, "w-[1003px] table-fixed border-separate border-spacing-0 text-center text-[17px] leading-[19px] text-black")}>
        <colgroup>
          <col className="w-[34px]" />
          <col className="w-[109px]" />
          <col className="w-[37px]" />
          <col className="w-[128px]" />
          <col className="w-[61px]" />
          <col className="w-[81px]" />
          <col className="w-[72px]" />
          <col className="w-[49px]" />
          <col className="w-[89px]" />
          <col className="w-[343px]" />
        </colgroup>
        <thead>
          <tr className="h-5 bg-linear-to-b from-[#f5f8fc] to-[#d5deeb] text-[14px] leading-[15px] text-[#27413e]">
            <th className="border-r border-b border-[#9eb6ce] bg-[#abc4e8] p-0">
              <svg viewBox="0 0 34 18" className="h-[18px] w-[33px]"><path d="M29 4v12H17z" fill="#e8f0fa" /></svg>
            </th>
            {COLS.map((c, i) => (
              <th key={i} className="border-r border-b border-[#9eb6ce] p-0 pt-1 font-normal">{c}</th>
            ))}
          </tr>
        </thead>
        <tbody>
          <tr className="h-[30px]">
            <RowHead n={1} />
            <td colSpan={9} className={clsx(CELL, "text-[24px] leading-[25px] font-bold")}>预审指示</td>
          </tr>
          <tr className="h-[30px] font-medium">
            <RowHead n={2} />
            <td className={CELL}>产品编号</td>
            <td colSpan={3} className={clsx(CELL, "text-[15px] font-bold")}>6V29U1XUA0</td>
            <td className={CELL}>预审日期</td>
            <td colSpan={2} className={clsx(CELL, "text-[15px] font-bold")}>2016/9/23</td>
            <td className={CELL}>预审人</td>
            <td className={CELL} />
          </tr>
          <tr className="h-[30px]">
            <RowHead n={3} />
            <td rowSpan={4} className={clsx(CELL, "font-medium whitespace-nowrap text-[#0000d8]")}>
              待确认光绘时
              <br />
              一起确认问题
            </td>
            <td className={clsx(CELL, "text-[16px] whitespace-nowrap")}>序号</td>
            <td colSpan={6} className={clsx(CELL, "font-medium text-[#0000d8]")}>待与客户确认问题(原因与内容)</td>
            <td className={CELL} />
          </tr>
          {[4, 5, 6].map((n) => (
            <tr key={n} className="h-[30px]">
              <RowHead n={n} />
              <td className={clsx(CELL, "text-[15px]")}>{n - 3}</td>
              <td colSpan={6} className={CELL} />
              <td className={CELL} />
            </tr>
          ))}
          <tr className="h-[30px]">
            <RowHead n={7} />
            <td colSpan={2} className={clsx(CELL, "font-medium")}>工艺流程指示</td>
            <td colSpan={7} className={CELL} />
          </tr>
          <tr className="h-[34px] font-bold">
            <RowHead n={8} />
            <td rowSpan={5} className={CELL} />
            <td className={clsx(CELL, "text-[15px]")}>1</td>
            <td colSpan={7} className={clsx(CELL, "pl-[2px] text-left text-[14px]")}>附图圈出的大概位置按我司常规加桥连，桥连位不包边，避免断板</td>
          </tr>
          <tr className="h-[30px] font-bold">
            <RowHead n={9} />
            <td className={clsx(CELL, "text-[15px]")}>2</td>
            <td colSpan={7} className={clsx(CELL, "pl-[2px] text-left text-[14px]")}>
              <span className="text-[13px]">edge_plated</span>层对应的位置需包边，桥连位置不包边且按削铜不露铜制作
            </td>
          </tr>
          <tr className="h-[30px] font-bold">
            <RowHead n={10} />
            <td className={clsx(CELL, "text-[15px]")}>3</td>
            <td colSpan={7} className={clsx(CELL, "pl-[2px] text-left text-[14px]")}>附图此类搭在包边铣槽上的过孔按删除制作</td>
          </tr>
          <tr className="h-[30px] font-bold">
            <RowHead n={11} />
            <td className={clsx(CELL, "text-[15px]")}>4</td>
            <td colSpan={7} className={CELL} />
          </tr>
          <tr className="h-[30px]">
            <th className="border-r border-[#9eb6ce] bg-[#e4ecf7]" />
            <td className={CELL} />
            <td colSpan={7} className={CELL} />
          </tr>
        </tbody>
      </table>
    </div>
  );
}

function ExcelWindow() {
  return (
    <section className={clsx(UI, "absolute top-[273px] right-0 bottom-1 left-[881px] flex flex-col overflow-hidden rounded-tl-[6px] border-t border-l border-[#3c5f8c] bg-[#bfd8f8] pl-[2px]")}>
      <div className="flex h-7 shrink-0 items-center bg-linear-to-b from-[#e3edfa] to-[#d3e3f8] pl-9">
        <div className="flex h-[22px] w-[107px] items-center gap-2 rounded-r-full border border-[#a9c1e2] bg-[#dce8f7] pl-[15px]">
          <svg viewBox="0 0 14 14" className="size-[14px]"><rect width="14" height="14" rx="1" fill="#4b4fa5" /><rect x="3" width="8" height="6" fill="#e6ecf8" /><rect x="4" y="9" width="6" height="5" fill="#c9d2ec" /></svg>
          <svg viewBox="0 0 14 13" className="h-[13px] w-[14px]" fill="none" stroke="#3f6cc0" strokeWidth="2.500"><path d="M2 1v5h5M2 6q4-5 8-3 4 4-2 9" /></svg>
          <Caret dark />
          <svg viewBox="0 0 14 13" className="h-[13px] w-[14px]" fill="none" stroke="#a9b8cf" strokeWidth="2.500"><path d="M12 1v5H7M12 6Q8 1 4 3q-4 4 2 9" /></svg>
          <Caret />
        </div>
        <span className="ml-2 border-t border-[#2f4f80] pt-[2px]"><Caret dark /></span>
        <h2 className="ml-[138px] text-[12px] leading-7 whitespace-pre text-[#6d7480]">
          <span className="text-[13px]">6V29U1XUA0-</span>预审指示<span className="text-[13px]">.xls</span>  [兼容模式]  -  <span className="text-[13px] text-[#3e6aaa]">Microsoft Excel</span>
        </h2>
      </div>
      <div className="flex h-7 shrink-0 items-end bg-[#bfdbff] pl-[47px] text-[12px] leading-[26px] text-[#15428b]">
        <button type="button" className="h-[27px] w-12 rounded-t-[3px] border border-b-0 border-[#8db2e3] bg-[#e9f1fb]">开始</button>
        <div className="flex h-[27px] gap-[29px] pl-[17px]">
          {TABS.map((t) => (
            <button key={t} type="button">{t}</button>
          ))}
        </div>
      </div>
      <svg viewBox="0 0 38 38" className="absolute top-[6px] left-[5px] size-[38px]">
        <defs>
          <radialGradient id="orb" cx="50%" cy="85%" r="80%">
            <stop offset="0" stopColor="#ffffff" />
            <stop offset="1" stopColor="#bcc6d6" />
          </radialGradient>
        </defs>
        <circle cx="19" cy="19" r="18" fill="url(#orb)" stroke="#7c8797" />
        <g fill="none" strokeWidth="3">
          <rect x="8.500" y="9" width="8" height="8" rx="1" stroke="#d8431c" />
          <rect x="20" y="12" width="6.500" height="6.500" rx="1" stroke="#4a90d0" />
          <rect x="10" y="20.500" width="7" height="7" rx="1" stroke="#f2a81d" />
          <rect x="20" y="20.500" width="7" height="7" rx="1" stroke="#69a93c" />
          <path d="M16 12h4M16 24h4M13 17v4M23 18v3" stroke="#e07a2c" strokeWidth="2" />
        </g>
      </svg>
      <Ribbon />
      <div className={clsx(MONO, "flex h-5 shrink-0 items-center bg-white text-[13px] leading-5 whitespace-nowrap text-black")}>
        <span className="mr-[6px] w-[140px] text-center"><span className="text-[14px]">对象</span> 131</span>
        <svg viewBox="0 0 7 4" className="h-1 w-[7px]"><path d="M0 0h7L3.500 4z" /></svg>
        <span className="ml-[6px] flex h-full w-[77px] items-center justify-between rounded-l-full bg-linear-to-b from-[#dde8f6] to-[#a9c1e2] pr-2 pl-1">
          <span className="size-2 rounded-full bg-[#c8d3e2] shadow-[1px_1px_0_#fff]" />
          <i className={clsx(SERIF, "text-[14px] font-bold text-[#3c4a60]")}>fx</i>
        </span>
        <label htmlFor="formula" className="sr-only">编辑栏</label>
        <input id="formula" defaultValue={'=EMBED("BMP 图像","")'} className="ml-[9px] h-full flex-1 outline-none" />
      </div>
      <div className="h-1 shrink-0 border-t border-b border-[#7f9cc2] bg-[#dce8f7]" />
      <Sheet />
    </section>
  );
}

/* ---------- page ---------- */

export default function App() {
  return (
    <main className="relative flex h-screen flex-col overflow-hidden bg-black text-black">
      <TitleBar />
      <MenuBar />
      <div className="flex min-h-0 flex-1 pb-[2px]">
        <LeftPanel />
        <div className="relative flex-1 overflow-hidden">
          <Board />
        </div>
        <ToolGrid />
      </div>
      <CommandBar />
      <StatusBar />

      <PopView />
      <ImeBar />
      <div className={clsx(UI, "absolute -top-7 left-[827px] flex size-[46px] items-end justify-center rounded-full border-2 border-[#d9f5dd] bg-[#45bf5f] pb-px text-[12px] leading-4 font-bold text-white shadow-[0_2px_6px_rgba(0,0,0,0.5)]")}>
        62
      </div>
      <ExcelWindow />
      <div className="absolute top-[522px] left-[366px] h-[182px] w-[396px] border-3 border-[#0000dc] bg-white pt-1 text-center">
        <p className={clsx(MONO, "pr-[6px] text-[17px] leading-[22px] font-medium text-[#dc1478]")}>
          此处<span className="text-[15px]">rout</span>层也要做桥连
        </p>
      </div>
      <svg className="pointer-events-none absolute inset-0 size-full" fill="#ff0080" stroke="#ff0080" strokeLinecap="round" strokeLinejoin="round">
        <path d="M519 519L754 211" strokeWidth="7" />
        <path d="M767 191L746 208l14 9z" strokeWidth="5" />
        <path d="M1176 776L1203 740" strokeWidth="7" />
        <path d="M1218 718L1197 736l12 8z" strokeWidth="5" />
      </svg>
      <svg viewBox="0 0 7 16" className="absolute top-[764px] left-[149px] h-4 w-[7px]" fill="none" stroke="#000"><path d="M0 .500h7M0 15.500h7M3.500 0v16" /></svg>
      <div className="absolute top-[812px] left-[730px] h-[15px] border border-black bg-[#ffffe1] px-[2px] font-['Roboto',sans-serif] text-[11px] leading-[13px] whitespace-nowrap shadow-[2px_1px_1px_#777]">
        Total Commander 7.0 public beta 2 - HelpInHand
      </div>
    </main>
  );
}
